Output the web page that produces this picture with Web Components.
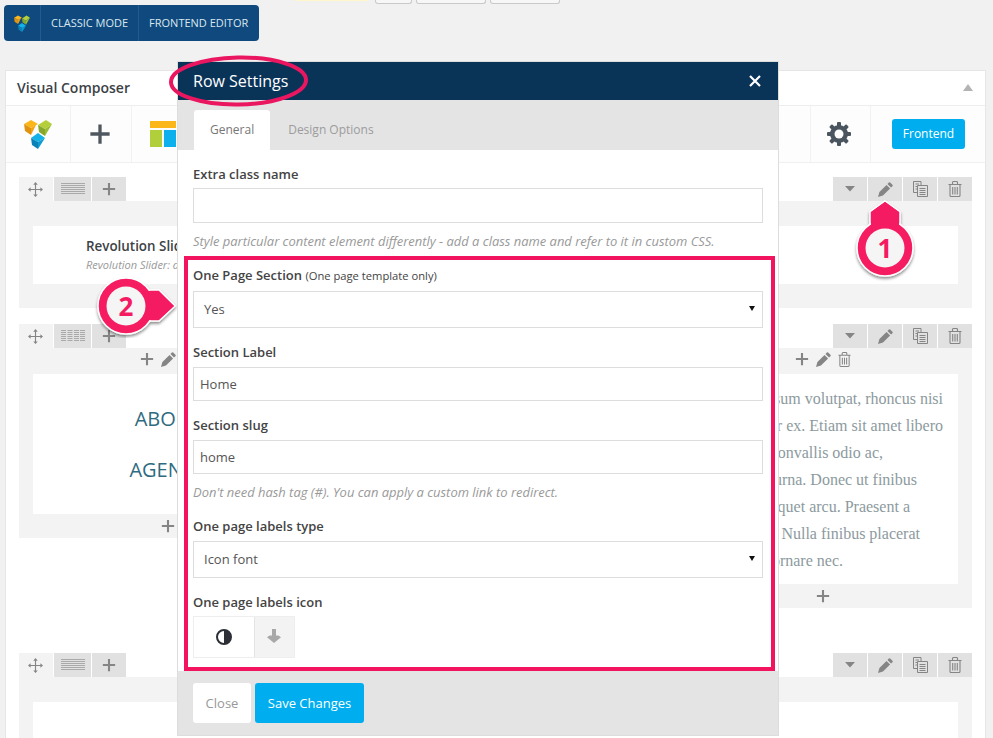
<!DOCTYPE html>
<html>
<head>
<meta charset="utf-8">
<title>Row Settings</title>
<style>
html,body{margin:0;padding:0;height:738px;overflow:hidden;background:#f1f1f1;font-family:"Open Sans",sans-serif;}
body{position:relative;}
</style>
</head>
<body>
<top-strip></top-strip>
<vc-toolbar></vc-toolbar>
<vc-panel>
  <vc-row layout="lines" gap="16">
    <vc-col bare>
      <slider-card></slider-card>
    </vc-col>
  </vc-row>
  <vc-row layout="cols" gap="45">
    <vc-col controls height="190" card="140">
      <menu-links></menu-links>
    </vc-col>
    <vc-col></vc-col>
    <vc-col controls height="260" card="210">
      <lorem-text></lorem-text>
    </vc-col>
  </vc-row>
  <vc-row layout="lines">
    <vc-col bare></vc-col>
  </vc-row>
</vc-panel>

<row-modal></row-modal>
<title-oval></title-oval>
<call-out n="1" dir="up"></call-out>
<call-out n="2" dir="right"></call-out>

<script>
const LOGO='<svg viewBox="0 0 28 30"><path fill="#fbb61a" d="M0 5l7-4 7 4-7 4z"/><path fill="#e0930f" d="M0 5l7 4v7l-6-4z"/><path fill="#f3a414" d="M7 9l5-3-5 10z"/><path fill="#b5cf3a" d="M14 6l8-5 6 4-7 5z"/><path fill="#86a62c" d="M14 6l7 4v7l-6-4z"/><path fill="#9cbc33" d="M21 10l7-5-7 12z"/><path fill="#12b2e8" d="M7 19l7-5 7 5-7 4z"/><path fill="#0a82b8" d="M7 19l7 4v7l-6-4z"/><path fill="#0e9bd2" d="M14 23l7-4-7 11z"/></svg>';
const ICONS={
  plus:'<svg viewBox="0 0 16 16"><path d="M6.800 1h2.400v5.800H15v2.400H9.200V15H6.800V9.200H1V6.800h5.800z"/></svg>',
  move:'<svg viewBox="0 0 16 16"><path d="M8 0l2.400 2.800H8.600v4.600h4.600V5.600L16 8l-2.800 2.400V8.600H8.600v4.600h1.800L8 16l-2.400-2.800h1.800V8.600H2.800v1.800L0 8l2.800-2.400v1.800h4.600V2.800H5.600z"/></svg>',
  lines:'<svg viewBox="0 0 24 12" fill="none" stroke-width="1"><path stroke="#a9a9a9" d="M0 .5h24M0 2.500h24M0 4.500h24M0 6.500h24M0 8.500h24M0 10.500h24"/></svg>',
  cols:'<svg viewBox="0 0 24 12" fill="none" stroke-width="1"><path stroke="#a9a9a9" d="M0 .5h5M0 2.500h5M0 4.500h5M0 6.500h5M0 8.500h5M0 10.500h5M6.500 .5h5M6.500 2.500h5M6.500 4.500h5M6.500 6.500h5M6.500 8.500h5M6.500 10.500h5M13 .5h5M13 2.500h5M13 4.500h5M13 6.500h5M13 8.500h5M13 10.500h5M19 .5h5M19 2.500h5M19 4.500h5M19 6.500h5M19 8.500h5M19 10.500h5"/></svg>',
  caret:'<svg viewBox="0 0 10 6"><path d="M0 0h10L5 5.500z"/></svg>',
  pencil:'<svg viewBox="0 0 16 16"><path d="M11.600.6a1 1 0 0 1 1.400 0l2.400 2.400a1 1 0 0 1 0 1.400l-1.500 1.500-3.800-3.800zM9.100 3.100l3.800 3.800-7.600 7.600L0 16l1.500-5.300z"/></svg>',
  copy:'<svg viewBox="0 0 15 16" fill="none" stroke="#858585" stroke-width="1"><path d="M4 11.500H.5V.5h7.500V4.500M4.500 4.500h10v11h-10zM2.500 3h3.500M2.500 5.500h1.500M2.500 8h1.500M6.500 7.500h6M6.500 9.500h6M6.500 11.500h6M6.500 13.500h6"/></svg>',
  trash:'<svg viewBox="0 0 14 16" fill="none" stroke="#858585" stroke-width="1.100"><path d="M.5 3.500h13M2 3.500v11a1 1 0 0 0 1 1h8a1 1 0 0 0 1-1v-11M4.500 3.500V1.500a1 1 0 0 1 1-1h3a1 1 0 0 1 1 1v2M4.700 6v7.500M7 6v7.500M9.300 6v7.500"/></svg>',
  gear:'<svg viewBox="0 0 24 24"><g fill="#4a5560"><rect x="10" y="0" width="4" height="24" rx="1"/><rect x="10" y="0" width="4" height="24" rx="1" transform="rotate(45 12 12)"/><rect x="10" y="0" width="4" height="24" rx="1" transform="rotate(90 12 12)"/><rect x="10" y="0" width="4" height="24" rx="1" transform="rotate(135 12 12)"/><circle cx="12" cy="12" r="9"/></g><circle cx="12" cy="12" r="4.500" fill="#fdfdfd"/></svg>',
  half:'<svg viewBox="0 0 16 16"><circle cx="8" cy="8" r="7" fill="#fff" stroke="#2c2f36" stroke-width="2"/><path fill="#2c2f36" d="M8 1a7 7 0 0 1 0 14z"/></svg>',
  down:'<svg viewBox="0 0 14 14"><path fill="#a8a8a8" d="M5 0h4v6.500h2.400L14 8.200 7 14 0 8.200 2.600 6.500H5z"/></svg>',
  tpl:'<svg viewBox="0 0 26 26"><path fill="#fbb61a" d="M0 0h26v7H0z"/><path fill="#b1cf3a" d="M0 9h12v17H0z"/><path fill="#0cb0ec" d="M14 9h12v17H14z"/></svg>',
  logo:LOGO
};

class VcIcon extends HTMLElement{
    constructor()
    {
        super();
        this.attachShadow({mode:"open"});
    }
    connectedCallback()
    {
        const s=this.getAttribute("size")||16;
        const h=this.getAttribute("h")||s;
        const c=this.getAttribute("color")||"#858585";
        this.shadowRoot.innerHTML=`<style>
        :host{display:inline-flex;width:${s}px;height:${h}px;flex:none;}
        svg{width:100%;height:100%;display:block;}
        svg:not([fill]){fill:${c};}
        </style>${ICONS[this.getAttribute("name")]}`;
    }
}
customElements.define("vc-icon",VcIcon);

class TopStrip extends HTMLElement{
    constructor()
    {
        super();
        this.attachShadow({mode:"open"});
        this.shadowRoot.innerHTML=`<style>
        :host{display:flex;height:5px;align-items:flex-start;padding-left:295px;box-sizing:border-box;}
        .note{width:73px;height:1px;background:#fff6cc;margin-right:7px;}
        .btn{height:3px;border:1px solid #c9c9c9;border-top:0;border-radius:0 0 3px 3px;background:#f7f7f7;margin-right:4px;}
        </style>
        <div class="note"></div>
        <div class="btn" style="width:35px"></div>
        <div class="btn" style="width:68px"></div>
        <div class="btn" style="width:68px"></div>`;
    }
}
customElements.define("top-strip",TopStrip);

class VcToolbar extends HTMLElement{
    constructor()
    {
        super();
        this.attachShadow({mode:"open"});
        this.shadowRoot.innerHTML=`<style>
        :host{display:flex;width:255px;height:36px;margin-left:4px;background:#10497e;border-radius:4px;color:#d9e8ee;font:11px/36px "Open Sans",sans-serif;}
        div{border-right:1px solid #245a8c;padding:0 10px;white-space:nowrap;}
        div:last-child{border:0;}
        .logo{width:16px;display:flex;align-items:center;padding:0 10px 0 10px;}
        </style>
        <div class="logo"><vc-icon name="logo" size="16" h="17"></vc-icon></div>
        <div>CLASSIC MODE</div>
        <div>FRONTEND EDITOR</div>`;
    }
}
customElements.define("vc-toolbar",VcToolbar);

class VcPanel extends HTMLElement{
    constructor()
    {
        super();
        this.attachShadow({mode:"open"});
        this.shadowRoot.innerHTML=`<style>
        :host{display:block;width:981px;height:668px;margin:29px 0 0 5px;box-sizing:border-box;background:#fff;border:1px solid #e6e6e6;border-bottom:0;overflow:hidden;}
        header{height:35px;box-sizing:border-box;display:flex;align-items:center;justify-content:space-between;padding:0 12px 2px 11px;font:600 14px "Open Sans",sans-serif;color:#3d4246;border-bottom:1px solid #eee;}
        .tri{width:0;height:0;border:5px solid transparent;border-top:0;border-bottom:7px solid #b3b3b3;}
        nav{height:56px;display:flex;align-items:center;background:#fdfdfd;border-bottom:1px solid #f0f0f0;}
        nav>div{height:100%;display:flex;align-items:center;justify-content:center;border-right:1px solid #f2f2f2;box-sizing:border-box;}
        .spacer{flex:1;}
        .front{background:#00aeef;color:#fff;border-radius:3px;width:73px;height:30px;font:12px/30px "Open Sans",sans-serif;text-align:center;margin:0 20px 0 21px;}
        .rows{padding:14px 13px 0;}
        </style>
        <header>Visual Composer<span class="tri"></span></header>
        <nav>
          <div style="width:65px"><vc-icon name="logo" size="28" h="30"></vc-icon></div>
          <div style="width:61px;padding-right:2px"><vc-icon name="plus" size="22" color="#50585f"></vc-icon></div>
          <div style="width:60px;border:0;padding-left:1px"><vc-icon name="tpl" size="26"></vc-icon></div>
          <div class="spacer" style="border:0"></div>
          <div style="width:61px;border-left:1px solid #f2f2f2;padding-right:3px"><vc-icon name="gear" size="24"></vc-icon></div>
          <span class="front">Frontend</span>
        </nav>
        <div class="rows"><slot></slot></div>`;
    }
}
customElements.define("vc-panel",VcPanel);

class VcRow extends HTMLElement{
    constructor()
    {
        super();
        this.attachShadow({mode:"open"});
    }
    connectedCallback()
    {
        const layout=this.getAttribute("layout");
        const gap=this.getAttribute("gap")||0;
        this.shadowRoot.innerHTML=`<style>
        :host{display:block;margin-bottom:${gap}px;}
        .bar{height:24px;display:flex;justify-content:space-between;}
        .group{display:flex;gap:1px;}
        .b{width:34px;height:24px;display:flex;align-items:center;justify-content:center;background:#e1e1e1;}
        .b.m{background:#f3f3f3;padding-right:2px;box-sizing:border-box;}
        .b.wide{width:37px;}
        .cols{display:grid;grid-template-columns:298px 298px 298px;justify-content:space-between;align-items:start;}
        .single{display:block;}
        </style>
        <div class="bar">
          <div class="group">
            <div class="b m"><vc-icon name="move" size="15"></vc-icon></div>
            <div class="b wide"><vc-icon name="${layout}" size="24" h="12"></vc-icon></div>
            <div class="b"><vc-icon name="plus" size="14"></vc-icon></div>
          </div>
          <div class="group">
            <div class="b"><vc-icon name="caret" size="10" h="6"></vc-icon></div>
            <div class="b"><vc-icon name="pencil" size="15"></vc-icon></div>
            <div class="b"><vc-icon name="copy" size="15" h="16"></vc-icon></div>
            <div class="b"><vc-icon name="trash" size="14" h="16"></vc-icon></div>
          </div>
        </div>
        <div class="${layout=="cols"?"cols":"single"}"><slot></slot></div>`;
    }
}
customElements.define("vc-row",VcRow);

class VcCol extends HTMLElement{
    constructor()
    {
        super();
        this.attachShadow({mode:"open"});
    }
    connectedCallback()
    {
        if(this.hasAttribute("bare")){
            this.shadowRoot.innerHTML=`<style>
            :host{display:block;background:#f3f3f3;padding:25px 14px 24px;}
            .card{background:#fff;min-height:58px;}
            </style><div class="card"><slot></slot></div>`;
            return;
        }
        if(!this.hasAttribute("controls")){
            this.shadowRoot.innerHTML=`<style>:host{display:block;}</style>`;
            return;
        }
        const card=this.getAttribute("card");
        this.shadowRoot.innerHTML=`<style>
        :host{display:block;background:#f3f3f3;height:${this.getAttribute("height")}px;}
        .top{height:26px;box-sizing:border-box;padding-bottom:4px;display:flex;align-items:center;justify-content:center;gap:7px;}
        .card{margin:0 14px;height:${card}px;background:#fff;overflow:hidden;}
        .add{height:24px;display:flex;align-items:center;justify-content:center;}
        </style>
        <div class="top">
          <vc-icon name="plus" size="14"></vc-icon>
          <vc-icon name="pencil" size="15"></vc-icon>
          <vc-icon name="trash" size="13" h="15"></vc-icon>
        </div>
        <div class="card"><slot></slot></div>
        <div class="add"><vc-icon name="plus" size="14"></vc-icon></div>`;
    }
}
customElements.define("vc-col",VcCol);

class SliderCard extends HTMLElement{
    constructor()
    {
        super();
        this.attachShadow({mode:"open"});
        this.shadowRoot.innerHTML=`<style>
        :host{display:block;padding:12px 0 0 53px;white-space:nowrap;}
        b{display:block;font:600 13.400px/16px "Open Sans",sans-serif;color:#3d4246;}
        i{display:block;font:italic 11px/14px "Open Sans",sans-serif;color:#999;margin-top:4px;}
        </style>
        <b>Revolution Slider</b>
        <i>Revolution Slider: default</i>`;
    }
}
customElements.define("slider-card",SliderCard);

class MenuLinks extends HTMLElement{
    constructor()
    {
        super();
        this.attachShadow({mode:"open"});
        this.shadowRoot.innerHTML=`<style>
        :host{display:block;text-align:center;padding-top:31px;font:20px/27px "Open Sans",sans-serif;color:#2f6b80;}
        div{margin-bottom:24px;}
        span{visibility:hidden;}
        </style>
        <div>ABO<span>UT</span></div>
        <div>AGEN<span>CY</span></div>`;
    }
}
customElements.define("menu-links",MenuLinks);

class LoremText extends HTMLElement{
    constructor()
    {
        super();
        this.attachShadow({mode:"open"});
        this.shadowRoot.innerHTML=`<style>
        :host{display:block;padding-top:11px;font:16px/27px "Liberation Serif",serif;color:#8c9a9e;text-align:right;white-space:nowrap;}
        </style>
        <div style="padding-right:15px">sum volutpat, rhoncus nisi</div>
        <div style="padding-right:15px">r ex. Etiam sit amet libero</div>
        <div style="padding-right:75px">onvallis odio ac,</div>
        <div style="padding-right:41px">urna. Donec ut finibus</div>
        <div style="padding-right:48px">quet arcu. Praesent a</div>
        <div style="padding-right:38px">Nulla finibus placerat</div>
        <div style="padding-right:115px">ornare nec.</div>`;
    }
}
customElements.define("lorem-text",LoremText);

class FormField extends HTMLElement{
    constructor()
    {
        super();
        this.attachShadow({mode:"open"});
    }
    connectedCallback()
    {
        const kind=this.getAttribute("kind")||"input";
        const value=this.getAttribute("value")||"";
        const hint=this.getAttribute("hint");
        const note=this.getAttribute("note");
        const box=kind=="select"
            ?`<div class="ctl sel"><span>${value}</span><em></em></div>`
            :`<div class="ctl">${value}</div>`;
        this.shadowRoot.innerHTML=`<style>
        :host{display:block;margin-top:${this.getAttribute("top")||15}px;}
        label{display:block;height:18px;font:600 13px/18px "Open Sans",sans-serif;color:#444;margin-bottom:${this.getAttribute("gap")||6}px;}
        small{font-size:11.200px;font-weight:400;}
        .ctl{height:${this.getAttribute("h")||34}px;box-sizing:border-box;border:1px solid #ddd;background:#fff;padding:0 6px;display:flex;align-items:center;font:13px "Open Sans",sans-serif;color:#555;}
        .sel{padding:0 7px 2px 10px;justify-content:space-between;}
        em{width:0;height:0;border:3px solid transparent;border-bottom:0;border-top:5px solid #111;}
        p{margin:${this.getAttribute("hintgap")||9}px 0 0;height:18px;font:italic 12.950px/18px "Open Sans",sans-serif;color:#999;white-space:nowrap;}
        </style>
        <label>${this.getAttribute("label")}${note?` <small>${note}</small>`:""}</label>
        ${box}
        ${hint?`<p>${hint}</p>`:""}`;
    }
}
customElements.define("form-field",FormField);

class IconPicker extends HTMLElement{
    constructor()
    {
        super();
        this.attachShadow({mode:"open"});
        this.shadowRoot.innerHTML=`<style>
        :host{display:block;margin-top:15px;}
        label{display:block;height:18px;font:600 13px/18px "Open Sans",sans-serif;color:#444;margin-bottom:5px;}
        .pick{display:flex;width:102px;height:42px;box-sizing:border-box;border:1px solid #eee;}
        .pick div{display:flex;align-items:center;justify-content:center;}
        .a{width:60px;border-right:1px solid #e4e4e4;}
        .b{flex:1;background:#f3f3f3;padding:0 2px 2px 0;}
        </style>
        <label>One page labels icon</label>
        <div class="pick">
          <div class="a"><vc-icon name="half" size="16"></vc-icon></div>
          <div class="b"><vc-icon name="down" size="14"></vc-icon></div>
        </div>`;
    }
}
customElements.define("icon-picker",IconPicker);

class RowModal extends HTMLElement{
    constructor()
    {
        super();
        this.attachShadow({mode:"open"});
        this.shadowRoot.innerHTML=`<style>
        :host{position:absolute;left:178px;top:62px;width:600px;height:673px;display:flex;flex-direction:column;background:#fff;box-shadow:0 0 0 1px #ddd;}
        header{height:38px;flex:none;background:#0a3358;color:#fff;display:flex;align-items:center;justify-content:space-between;padding:0 17px 0 15px;font:16px "Open Sans",sans-serif;}
        .x{width:12px;height:12px;}
        .x path{stroke:#fff;stroke-width:2.200;}
        .tabs{height:50px;flex:none;background:#e4e4e4;display:flex;align-items:flex-end;padding-left:16px;font:12px/40px "Open Sans",sans-serif;color:#9c9c9c;}
        .tabs span{height:40px;padding:0 16px;}
        .tabs .on{background:#fff;color:#777;border-radius:3px 3px 0 0;margin-right:2px;}
        .body{flex:1;padding:15px 15px 0;}
        .hl{margin:6px -12px 0 -9px;height:415px;box-sizing:border-box;border:4px solid #f2145f;padding:6px 8px 0 5px;}
        footer{height:64px;flex:none;box-sizing:border-box;background:#e4e4e4;padding:12px 15px;display:flex;gap:4px;font:13px/40px "Open Sans",sans-serif;}
        .close{width:58px;height:40px;background:#fff;border-radius:3px;text-align:center;color:#999;}
        .save{width:109px;height:40px;background:#00aeef;border-radius:3px;text-align:center;color:#fff;}
        </style>
        <header>Row Settings
          <svg class="x" viewBox="0 0 12 12"><path d="M1 1l10 10M11 1L1 11"/></svg>
        </header>
        <div class="tabs"><span class="on">General</span><span>Design Options</span></div>
        <div class="body">
          <form-field top="0" gap="5" h="35" label="Extra class name" hint="Style particular content element differently - add a class name and refer to it in custom CSS."></form-field>
          <div class="hl">
            <form-field top="0" gap="7" h="37" kind="select" value="Yes" label="One Page Section" note="(One page template only)"></form-field>
            <form-field label="Section Label" value="Home"></form-field>
            <form-field label="Section slug" value="home" hint="Don't need hash tag (#). You can apply a custom link to redirect."></form-field>
            <form-field top="16" h="37" kind="select" value="Icon font" label="One page labels type"></form-field>
            <icon-picker></icon-picker>
          </div>
        </div>
        <footer><span class="close">Close</span><span class="save">Save Changes</span></footer>`;
    }
}
customElements.define("row-modal",RowModal);

class TitleOval extends HTMLElement{
    constructor()
    {
        super();
        this.attachShadow({mode:"open"});
        this.shadowRoot.innerHTML=`<style>
        :host{position:absolute;left:168px;top:54px;width:142px;height:54px;}
        svg{display:block;}
        </style>
        <svg width="142" height="54" viewBox="0 0 142 54"><ellipse cx="70.500" cy="27" rx="67.500" ry="23.500" fill="none" stroke="#ea1660" stroke-width="4" transform="rotate(-1 70 27)"/></svg>`;
    }
}
customElements.define("title-oval",TitleOval);

class CallOut extends HTMLElement{
    constructor()
    {
        super();
        this.attachShadow({mode:"open"});
    }
    connectedCallback()
    {
        const up=this.getAttribute("dir")=="up";
        const shape=up
            ?`<svg width="64" height="84" viewBox="0 0 64 84"><defs><filter id="s" x="-20%" y="-20%" width="140%" height="140%"><feDropShadow dx="0" dy="2" stdDeviation="1.500" flood-color="#000" flood-opacity=".45"/></filter></defs>
              <g filter="url(#s)"><path d="M32 2L47 13V36H17V13Z" fill="#f51b62" stroke="#fff" stroke-width="1.500"/><circle cx="32" cy="49" r="28" fill="#f51b62" stroke="#fff" stroke-width="1.500"/></g>
              <path d="M32 3L46 13V36H18V13Z" fill="#f51b62"/><circle cx="32" cy="49" r="19.500" fill="#f5f5f5"/></svg>`
            :`<svg width="84" height="64" viewBox="0 0 84 64"><defs><filter id="s" x="-20%" y="-20%" width="140%" height="140%"><feDropShadow dx="0" dy="2" stdDeviation="1.500" flood-color="#000" flood-opacity=".45"/></filter></defs>
              <g filter="url(#s)"><path d="M82 32L66 47H36V16H66Z" fill="#f51b62" stroke="#fff" stroke-width="1.500"/><circle cx="33" cy="32" r="28" fill="#f51b62" stroke="#fff" stroke-width="1.500"/></g>
              <path d="M81 32L65.500 46H36V17H65.500Z" fill="#f51b62"/><circle cx="33" cy="32" r="19.500" fill="#f5f5f5"/></svg>`;
        this.shadowRoot.innerHTML=`<style>
        :host{position:absolute;display:block;left:${up?853:93}px;top:${up?199:274}px;}
        svg{display:block;}
        span{position:absolute;left:${up?0:1}px;top:${up?17:0}px;width:64px;height:64px;display:flex;align-items:center;justify-content:center;font:bold 26px "Open Sans",sans-serif;color:#f51b62;}
        </style>${shape}<span>${this.getAttribute("n")}</span>`;
    }
}
customElements.define("call-out",CallOut);
</script>
</body>
</html>
